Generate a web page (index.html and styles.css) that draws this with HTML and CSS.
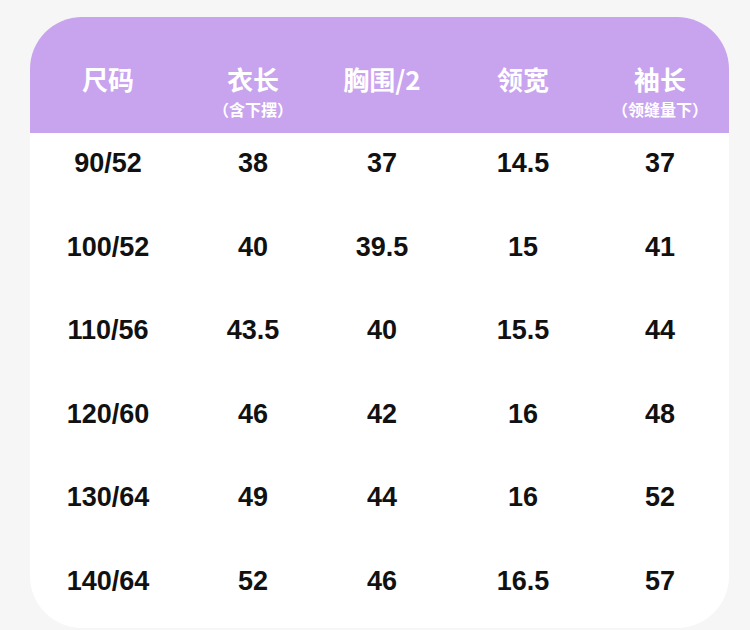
FILE: index.html
```html
<!DOCTYPE html>
<html lang="zh">
<head>
<meta charset="utf-8">
<link rel="stylesheet" href="styles.css">
</head>
<body>
<div class="card">
  <div class="head">
    <div class="hc"><span class="ht">尺码</span></div>
    <div class="hc"><span class="ht">衣长</span><span class="hs">（含下摆）</span></div>
    <div class="hc"><span class="ht">胸围/2</span></div>
    <div class="hc"><span class="ht">领宽</span></div>
    <div class="hc"><span class="ht">袖长</span><span class="hs">（领缝量下）</span></div>
  </div>
  <div class="body">
    <div class="row"><span>90/52</span><span>38</span><span>37</span><span>14.5</span><span>37</span></div>
    <div class="row"><span>100/52</span><span>40</span><span>39.5</span><span>15</span><span>41</span></div>
    <div class="row"><span>110/56</span><span>43.5</span><span>40</span><span>15.5</span><span>44</span></div>
    <div class="row"><span>120/60</span><span>46</span><span>42</span><span>16</span><span>48</span></div>
    <div class="row"><span>130/64</span><span>49</span><span>44</span><span>16</span><span>52</span></div>
    <div class="row"><span>140/64</span><span>52</span><span>46</span><span>16.5</span><span>57</span></div>
  </div>
</div>
</body>
</html>
```
FILE: styles.css
```css
html, body {
  margin: 0;
  padding: 0;
  background: #f6f6f6;
}
body {
  width: 750px;
  height: 630px;
  overflow: hidden;
  padding-top: 17px;
  box-sizing: border-box;
}
.card {
  margin-left: 30px;
  width: 699px;
  height: 611px;
  background: #ffffff;
  border-radius: 52px;
  overflow: hidden;
  box-sizing: border-box;
}
.head, .row {
  display: grid;
  grid-template-columns: 156px 134px 124px 158px 116px;
}
.head {
  height: 116px;
  background: #c8a3ee;
  padding-top: 46px;
  box-sizing: border-box;
}
.hc {
  display: flex;
  flex-direction: column;
  align-items: center;
  color: #ffffff;
  font-family: "Noto Sans CJK SC", "Noto Sans", sans-serif;
  font-weight: 700;
}
.ht {
  font-size: 26px;
  line-height: 32px;
}
.hs {
  font-size: 16px;
  line-height: 18px;
  margin-top: 5px;
}
.body {
  padding-top: 18px;
  display: flex;
  flex-direction: column;
  gap: 59.6px;
}
.row span {
  text-align: center;
  font-family: "Liberation Sans", Arial, sans-serif;
  font-weight: 700;
  font-size: 27px;
  line-height: 24px;
  color: #111111;
}
```
